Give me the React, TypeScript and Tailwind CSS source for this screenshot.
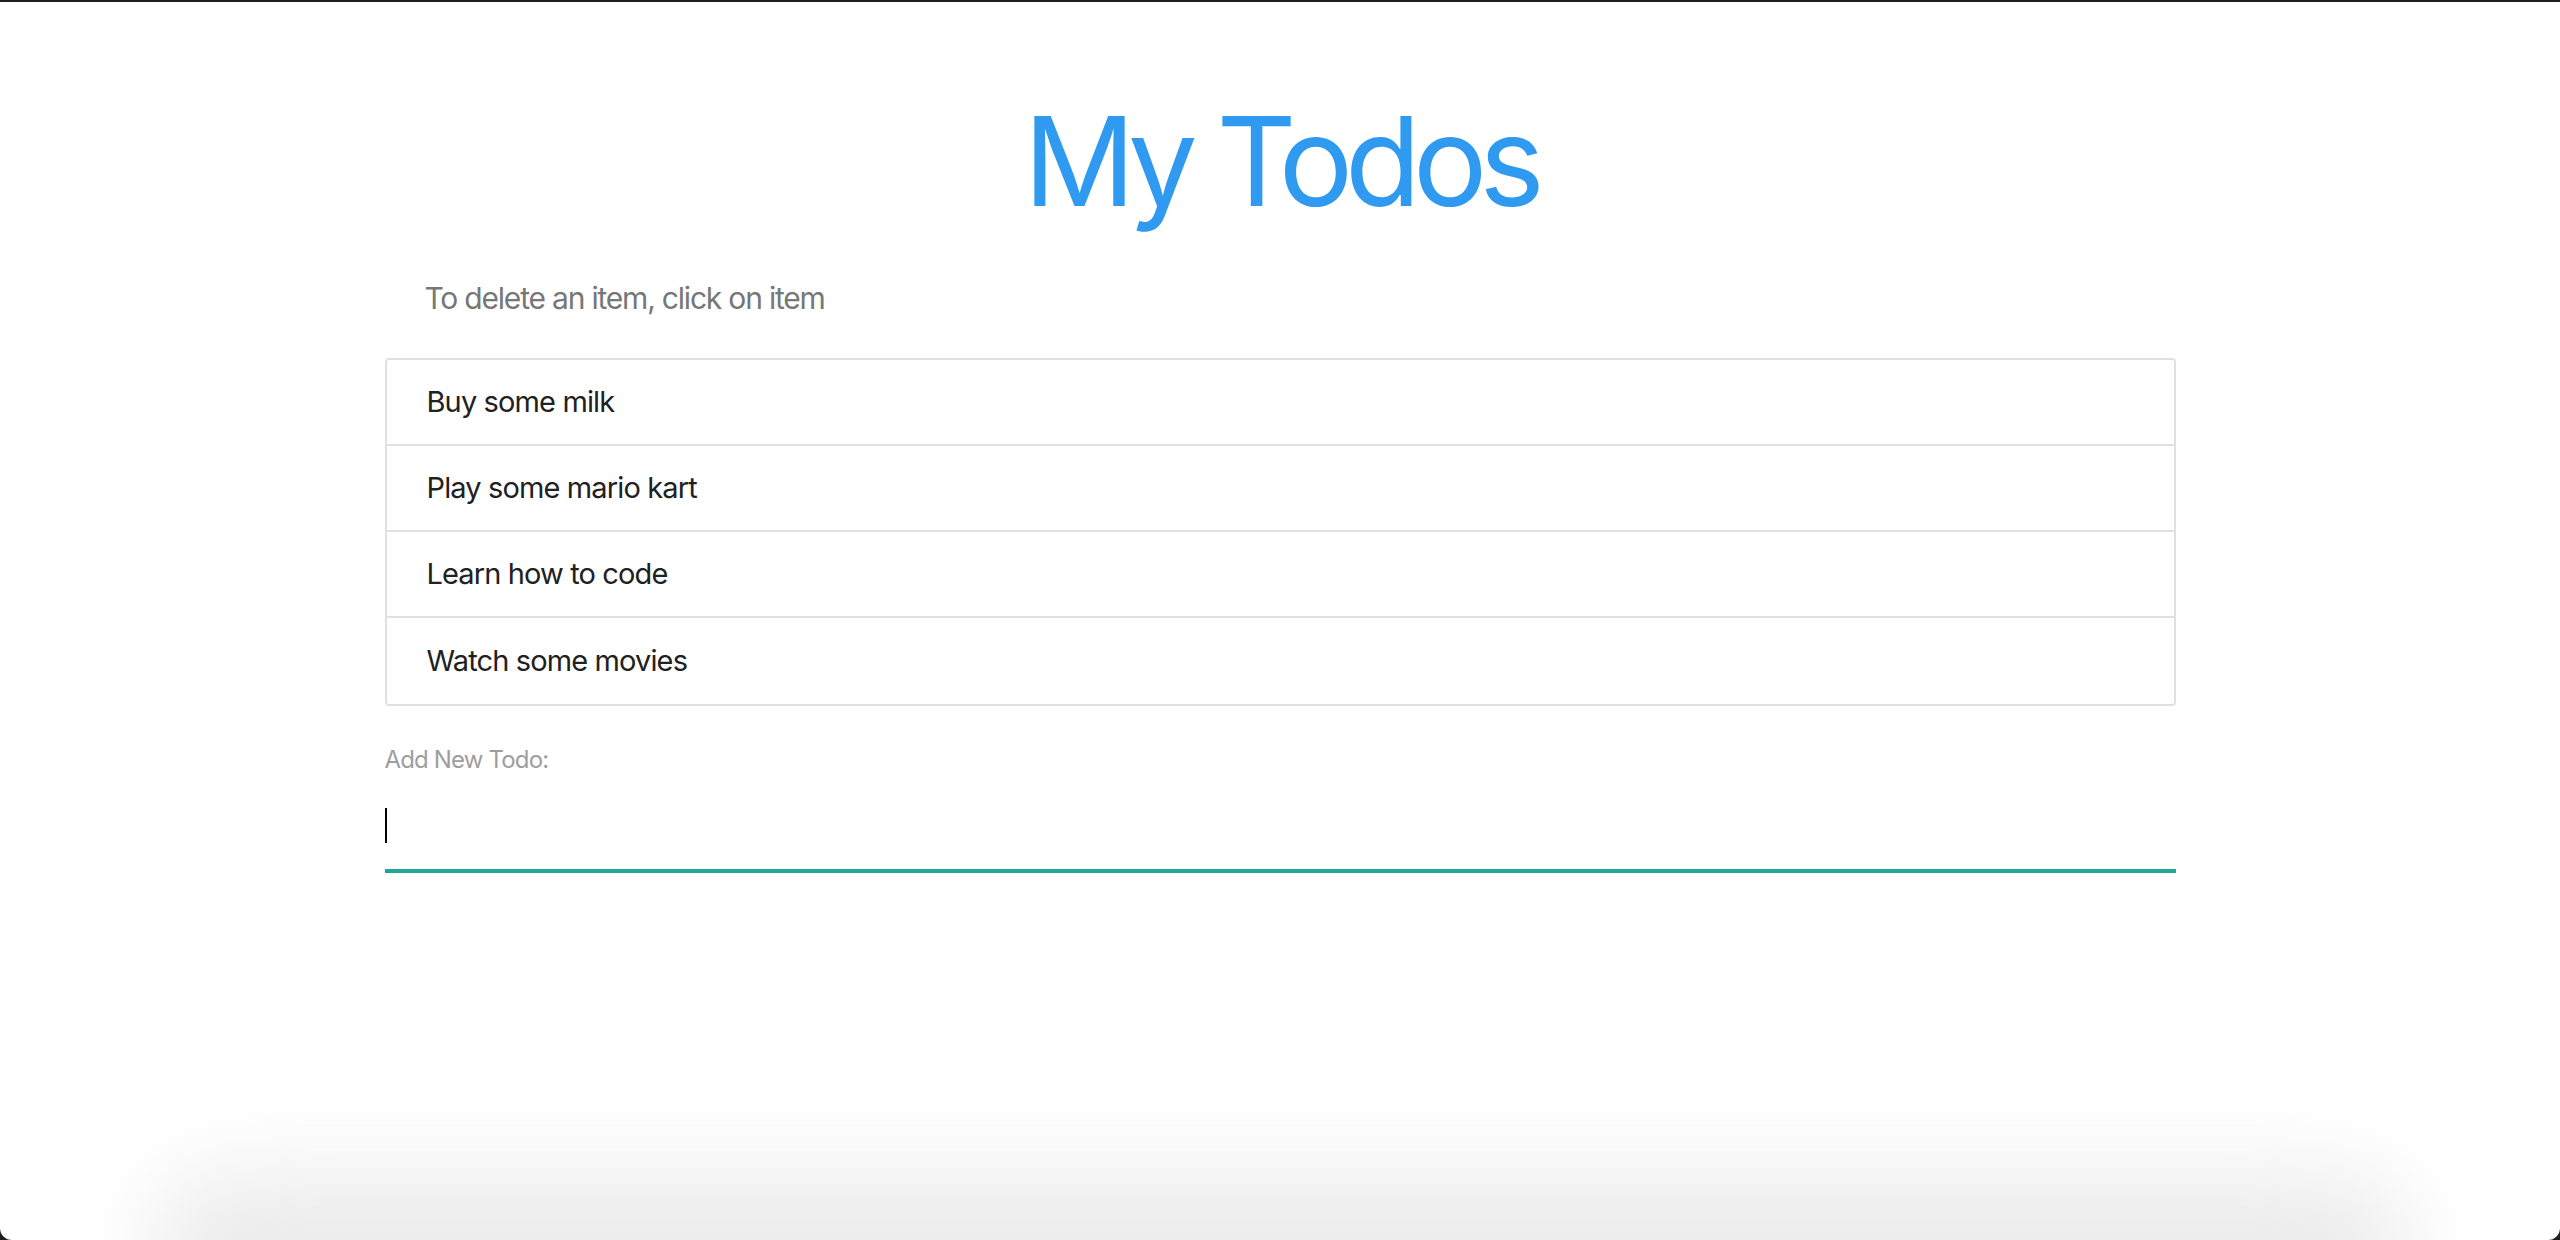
import { useState } from "react";

const TODOS = [
  "Buy some milk",
  "Play some mario kart",
  "Learn how to code",
  "Watch some movies",
];

export default function App() {
  const [todos, setTodos] = useState(TODOS);

  return (
    <div className="h-[1240px] w-full bg-[#1f1f1f] pt-[2px] font-['Inter',sans-serif]">
      <div className="relative h-full overflow-hidden rounded-b-[12px] bg-white">
        <div className="mx-auto w-[1791px]">
          <h1 className="mt-[97px] text-center text-[124px] font-normal leading-none tracking-[-0.065em] text-[#2f9af0]">
            My Todos
          </h1>

          <p className="mt-[60px] pl-[40px] text-[30px] leading-none tracking-[-0.04em] text-[#777777]">
            To delete an item, click on item
          </p>

          {/* Collection: each row deletes itself on click. */}
          <ul className="mt-[45px] rounded-[4px] border-2 border-[#e0e0e0]">
            {todos.map((t, i) => (
              <li
                key={t}
                onClick={() => setTodos(todos.filter((x) => x !== t))}
                className={`flex h-[86px] cursor-pointer items-center pl-[40px] text-[29px] tracking-[-0.03em] text-[#212121] ${
                  i < todos.length - 1 ? "border-b-2 border-[#e0e0e0]" : ""
                }`}
              >
                {t}
              </li>
            ))}
          </ul>

          <label className="mt-[42px] block text-[24px] leading-none tracking-[-0.035em] text-[#9e9e9e]">
            Add New Todo:
          </label>
          <div className="mt-[36px] h-[35px] w-[2px] bg-black" aria-hidden />
          <div className="mt-[26px] h-[4px] bg-[#26a69a]" />
        </div>

        {/* soft shadow bleeding up from the bottom edge */}
        <div className="pointer-events-none absolute bottom-[-95px] left-[150px] right-[150px] h-[160px] rounded-full bg-[#ebebeb] blur-[45px]" />
      </div>
    </div>
  );
}
